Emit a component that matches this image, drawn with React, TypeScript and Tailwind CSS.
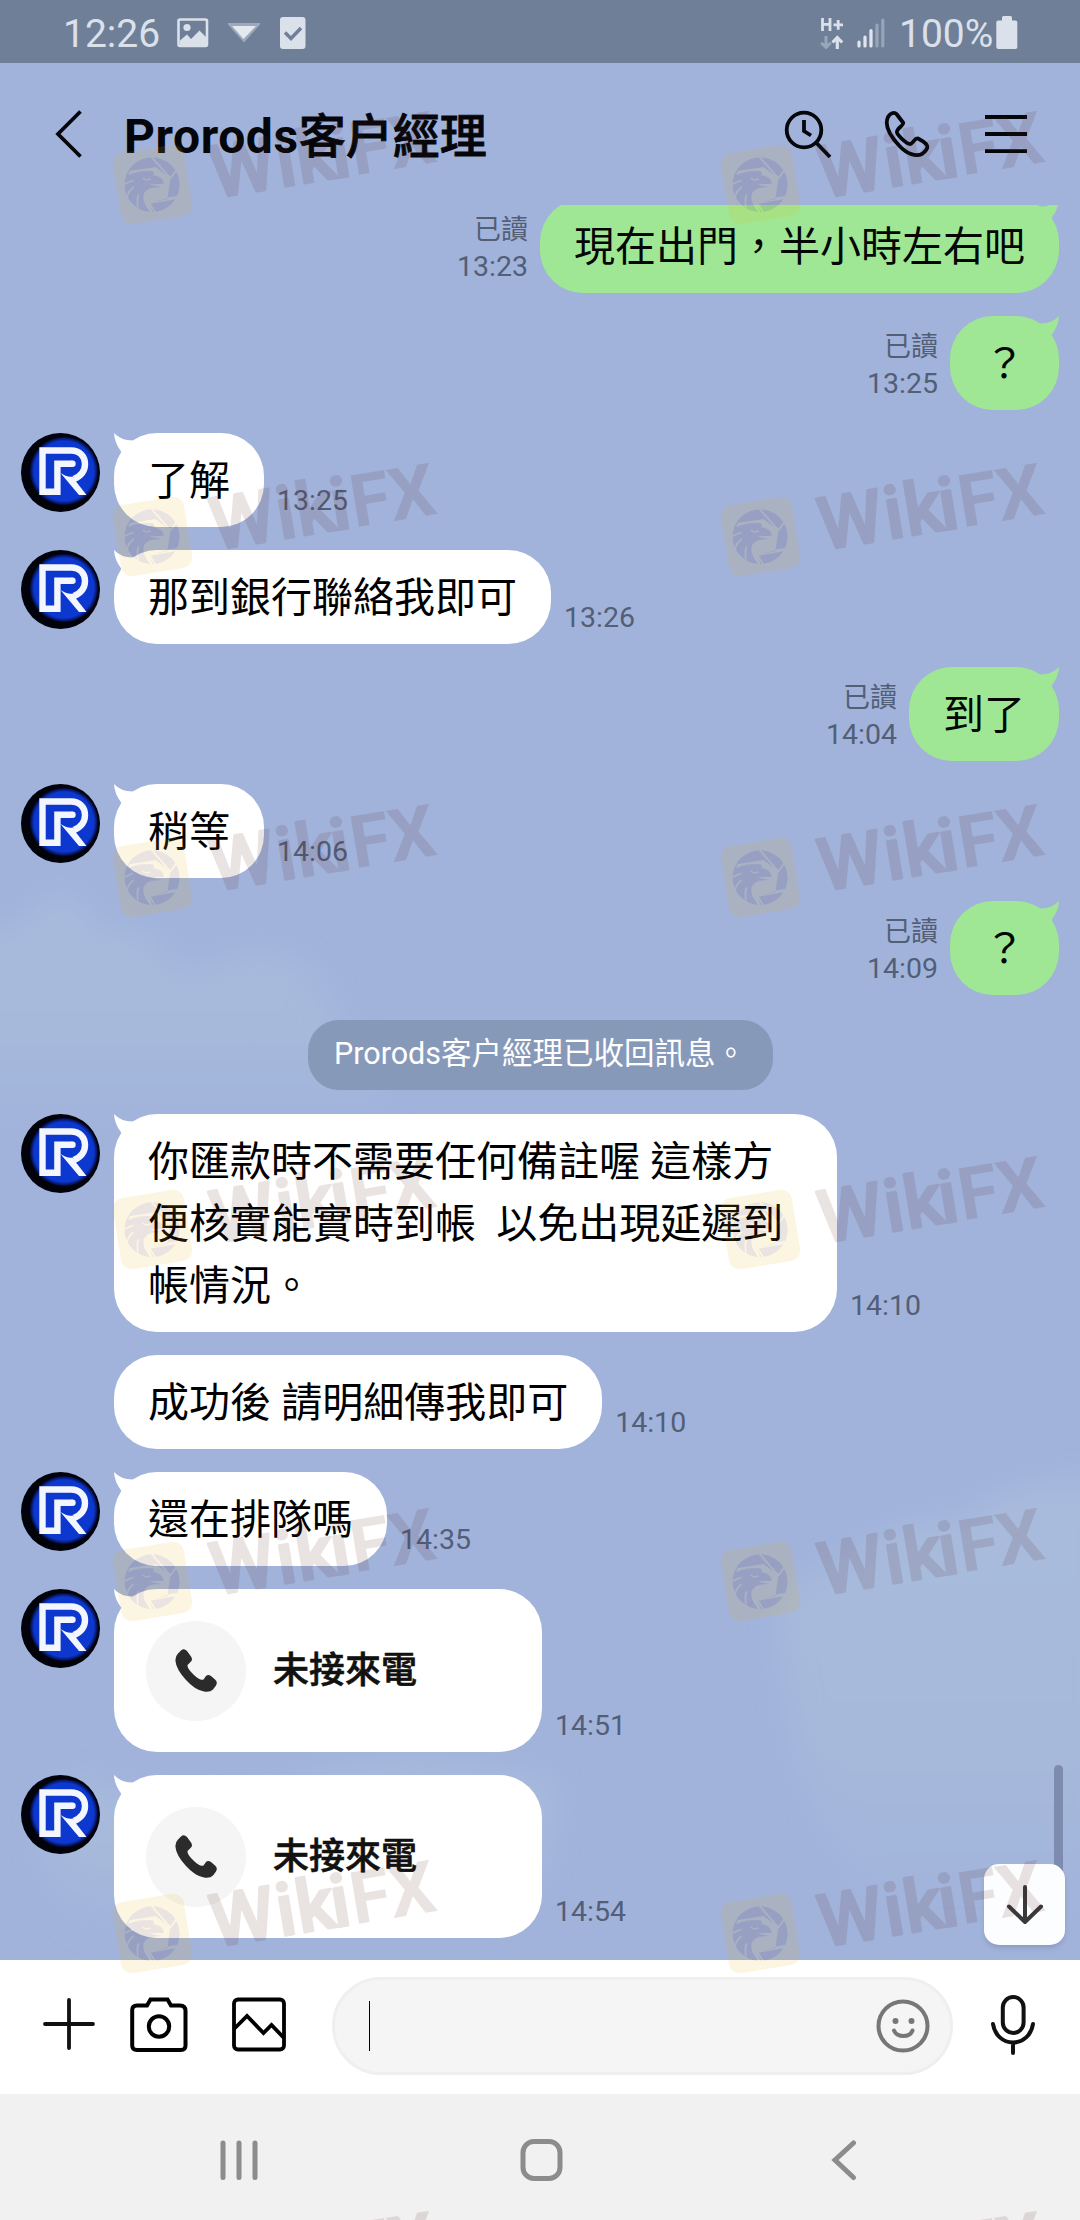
import type { ReactNode } from "react";

type Message = {
  kind: "in" | "out" | "call" | "system";
  text: string;
  time?: string;
  avatar?: boolean;
  wide?: boolean;
};

const messages: Message[] = [
  { kind: "out", text: "現在出門，半小時左右吧", time: "13:23" },
  { kind: "out", text: "？", time: "13:25" },
  { kind: "in", text: "了解", time: "13:25", avatar: true },
  { kind: "in", text: "那到銀行聯絡我即可", time: "13:26", avatar: true },
  { kind: "out", text: "到了", time: "14:04" },
  { kind: "in", text: "稍等", time: "14:06", avatar: true },
  { kind: "out", text: "？", time: "14:09" },
  { kind: "system", text: "Prorods客户經理已收回訊息。" },
  {
    kind: "in",
    text: "你匯款時不需要任何備註喔 這樣方\n便核實能實時到帳  以免出現延遲到\n帳情況。",
    time: "14:10",
    avatar: true,
    wide: true,
  },
  { kind: "in", text: "成功後 請明細傳我即可", time: "14:10" },
  { kind: "in", text: "還在排隊嗎", time: "14:35", avatar: true },
  { kind: "call", text: "未接來電", time: "14:51", avatar: true },
  { kind: "call", text: "未接來電", time: "14:54", avatar: true },
];

const watermarkRows = [144, 496, 837, 1189, 1541, 1893, 2244];

function StatusBar() {
  return (
    <div className="flex h-[63px] shrink-0 items-center bg-[#6f7f97] pl-[63px] text-[39px] leading-none text-[#dbe1eb]">
      <span className="mt-[6px] w-[114px]">12:26</span>
      <svg width="32" height="30" viewBox="0 0 32 30" className="mt-[2px]">
        <rect x="1.5" y="1.5" width="28.5" height="26.5" rx="1.5" fill="none" stroke="#dbe1eb" strokeWidth="2.6" />
        <circle cx="10" cy="9.5" r="3.6" fill="#dbe1eb" />
        <path d="M3 22.5 L10 16.5 L14 21 L22.5 12.5 L30 20 V28 H3Z" fill="#dbe1eb" />
      </svg>
      <svg width="32" height="22" viewBox="0 0 32 22" className="ml-[19px] mt-[3px]">
        <path d="M1 2 H31 L16 19Z" fill="#c9d2e0" opacity="0.5" stroke="#c9d2e0" strokeWidth="2" />
        <path d="M4 4 H28 L15.5 17Z" fill="#e4e8ef" />
      </svg>
      <svg width="26" height="32" viewBox="0 0 26 32" className="ml-[20px] mt-[2px]">
        <rect width="25.5" height="32" rx="3" fill="#dbe1eb" />
        <path d="M5 15.5 L11 21.5 L21 11" fill="none" stroke="#6f7f97" strokeWidth="3.4" />
      </svg>
      <div className="flex-1" />
      <svg width="24" height="36" viewBox="0 0 24 36" className="mt-[4px]">
        <g fill="none" stroke="#dbe1eb" strokeWidth="2.8">
          <path d="M2.5 2 V15 M10 2 V15 M2.5 8.3 H10 M13.5 8.8 H23 M18.2 4 V13.8" />
          <path d="M17.3 33 V23 M12.5 26.5 L17.3 21.5 L22.2 26.5" strokeWidth="3.2" />
          <path d="M6 20 V31 M1.2 26.8 L6 31.5 L10.8 26.8" stroke="#9aa6b9" strokeWidth="3" />
        </g>
      </svg>
      <svg width="28" height="30" viewBox="0 0 28 30" className="ml-[13px] mt-[3px]">
        <path d="M2 24 V28 M8 19 V28 M14 12.5 V28" stroke="#e1e6ee" strokeWidth="3.2" strokeLinecap="round" />
        <path d="M20 7 V28 M25.8 2 V28" stroke="#98a4b8" strokeWidth="3.2" strokeLinecap="round" />
      </svg>
      <span className="ml-[14px] mt-[6px] w-[97px]">100%</span>
      <svg width="22" height="33" viewBox="0 0 22 33" className="mr-[62px] mt-[2px]">
        <rect x="6" width="10" height="8" rx="1.5" fill="#dbe1eb" />
        <rect x="0.3" y="4.5" width="21" height="28.5" rx="2" fill="#dbe1eb" />
      </svg>
    </div>
  );
}

function Header() {
  return (
    <header className="flex h-[142px] shrink-0 items-center pl-[54px]">
      <svg width="30" height="50" viewBox="0 0 30 50" fill="none" stroke="#05060a" strokeWidth="3.8">
        <path d="M26.5 2.5 L4 25 L26.5 47.5" />
      </svg>
      <h1 className="mt-[6px] ml-[40px] flex-1 text-[48px] leading-none font-bold tracking-[0.6px] text-[#05060a]">
        Prorods
        <span className="text-[47px] font-medium tracking-normal [-webkit-text-stroke:0.8px_#05060a]">客户經理</span>
      </h1>
      <svg width="50" height="50" viewBox="0 0 50 50" fill="none" stroke="#05060a" strokeWidth="3.8">
        <circle cx="21" cy="21" r="17.3" />
        <path d="M33.5 34 L47 48 M21 11 V22 L28 26.5" />
      </svg>
      <svg width="50" height="50" viewBox="0 0 50 50" className="ml-[50px]" fill="none" stroke="#05060a" strokeWidth="3.8" strokeLinejoin="round">
        <path d="M5 8 C7 4.500 11 2.500 13.500 5 L20 13.500 C22 16 13 19.500 14 23.500 C15 27 24 35 27 35 C30 35 32 28 35 29.500 C38 31 41.500 33 43.500 35.500 C46 39 42 43 39 45 C33 48 24 45 16.500 37 C8 28 1 16.500 5 8Z" />
      </svg>
      <svg width="42" height="40" viewBox="0 0 42 40" className="mr-[53px] ml-[52px]" stroke="#05060a" strokeWidth="3.8">
        <path d="M0 3 H42 M0 20 H42 M0 37.200 H42" />
      </svg>
    </header>
  );
}

function Avatar() {
  return (
    <svg width="79" height="79" viewBox="0 0 79 79" className="shrink-0">
      <defs>
        <radialGradient id="face">
          <stop offset="0.88" stopColor="#0d38cf" />
          <stop offset="1" stopColor="#03093c" />
        </radialGradient>
      </defs>
      <circle cx="39.500" cy="39.500" r="39.500" fill="#02030a" />
      <circle cx="43" cy="38" r="34" fill="url(#face)" />
      <path
        d="M51.500 30.800 H36.400 V58.800 H21.500 V17.500 H50 C59 17.500 64 23.500 64 31 C64 38 60 43 53 46"
        fill="none"
        stroke="#f3f6ff"
        strokeWidth="6.400"
      />
      <circle cx="51.500" cy="30.800" r="3.200" fill="#f3f6ff" />
      <path d="M39.500 40 L58 62 H65.500 L55 48.500 L52 43.500 Q46 44.500 39.500 40Z" fill="#f3f6ff" />
    </svg>
  );
}

function Tail({ side }: { side: "left" | "right" }) {
  return (
    <svg
      width="32"
      height="28"
      viewBox="0 0 32 28"
      className={
        side === "left"
          ? "absolute top-0 left-0 text-white"
          : "absolute top-0 right-0 -scale-x-100 text-[#9fe795]"
      }
    >
      <path d="M0 0 Q7 7.500 18.500 7.500 L30 10 L10 26 L7.500 19 Q0.500 10 0 0Z" fill="currentColor" />
    </svg>
  );
}

function Time({ children }: { children: ReactNode }) {
  return <span className="text-[28.5px] leading-[34px] text-[#535e77]">{children}</span>;
}

function MessageRow({ message }: { message: Message }) {
  const { kind, text, time, avatar, wide } = message;

  if (kind === "system") {
    return (
      <div className="mt-[2px] mb-px flex h-[70px] w-[465px] items-center justify-center self-center rounded-[31px] bg-[#8799b9] pb-px text-[30.5px] leading-none whitespace-nowrap text-white">
        {text}
      </div>
    );
  }

  if (kind === "out") {
    return (
      <div className="mr-[21px] flex items-end justify-end gap-[12px]">
        <div className="flex flex-col items-end pb-[9px] text-[#535e77]">
          <span className="mb-px text-[27px] leading-[37px]">已讀</span>
          <Time>{time}</Time>
        </div>
        <div className="relative rounded-[43px] bg-[#9fe795] px-[34px] pt-[17px] pb-[15px] text-[41px] leading-[62px] text-[#040704]">
          <Tail side="right" />
          {text}
        </div>
      </div>
    );
  }

  return (
    <div className="ml-[21px] flex">
      <div className="w-[93px] shrink-0">{avatar && <Avatar />}</div>
      {kind === "call" ? (
        <div className="relative flex h-[163px] w-[428px] items-center rounded-[43px] bg-white pl-8">
          <Tail side="left" />
          <div className="grid size-[100px] place-content-center rounded-full bg-[#f5f5f5]">
            <svg width="42" height="43" viewBox="0 0 42 43" fill="#2b2b2b">
              <path d="M3 4.500 L6 1.500 Q9 -1 12 2 L16 7.500 Q18 10.500 16 12.500 L12.500 16 Q12 19.500 19 26 Q25 32 28.500 30.500 L31 27 Q33 25 36 27 L40 30.500 Q43 33 41 36.500 L38 40.500 Q35 43.500 29 42.500 Q20 41 11 31 Q1 20 0.500 12 Q0 7.500 3 4.500Z" />
            </svg>
          </div>
          <span className="ml-[27px] text-[36px] leading-none font-medium text-[#111] [-webkit-text-stroke:0.6px_#111]">{text}</span>
        </div>
      ) : (
        <div
          className={`relative rounded-[43px] bg-white px-[34px] pt-[17px] pb-[15px] text-[41px] leading-[62px] whitespace-pre text-black ${wide ? "w-[723px]" : ""}`}
        >
          {avatar && <Tail side="left" />}
          {text}
        </div>
      )}
      <div className="ml-[13px] flex items-end pb-[9px]">
        <Time>{time}</Time>
      </div>
    </div>
  );
}

function Clouds() {
  return (
    <svg width="1080" height="1897" className="absolute inset-0">
      <defs>
        <filter id="soft" x="-20%" y="-20%" width="140%" height="140%">
          <feGaussianBlur stdDeviation="14" />
        </filter>
        <linearGradient id="fade" x1="0" y1="0" x2="0" y2="1">
          <stop offset="0" stopColor="#a8bbdd" />
          <stop offset="0.6" stopColor="#a6b9db" />
          <stop offset="1" stopColor="#a1b3db" />
        </linearGradient>
      </defs>
      <g filter="url(#soft)" fill="url(#fade)">
        <path d="M-40 880 Q20 870 50 835 Q85 830 95 870 Q150 860 165 895 Q200 915 215 900 Q290 870 325 930 Q350 990 380 1010 L380 1060 H-40Z" />
        <path d="M780 1560 Q790 1510 850 1500 Q900 1450 960 1460 Q1010 1410 1110 1420 V1860 H900 Q790 1760 780 1560Z" />
        <path d="M40 1780 Q60 1700 100 1725 Q200 1750 300 1720 Q400 1680 550 1720 Q570 1780 500 1860 H80Z" />
      </g>
    </svg>
  );
}

function InputBar() {
  return (
    <div className="flex h-[134px] shrink-0 items-center bg-white pl-[43px]">
      <svg width="52" height="54" viewBox="0 0 52 54" className="-mt-[6px]" stroke="#111" strokeWidth="3.800" strokeLinecap="round">
        <path d="M2 27 H50 M26 3 V51" />
      </svg>
      <svg width="58" height="56" viewBox="0 0 58 56" className="-mt-[5px] ml-[35px]" fill="none" stroke="#000" strokeWidth="4">
        <path d="M2.200 13 Q2.200 8.500 7 8.500 H17 L20.500 2.500 H37.500 L41 8.500 H50 Q55.500 8.500 55.500 14 V48.500 Q55.500 53 51 53 H7 Q2.200 53 2.200 48.500Z" />
        <circle cx="29" cy="29.500" r="10.200" />
      </svg>
      <svg width="54" height="55" viewBox="0 0 54 55" className="-mt-[5px] ml-[44px]" fill="none" stroke="#000" strokeWidth="3.800">
        <rect x="2" y="2.500" width="50" height="50" rx="4" />
        <path d="M2 32 L15 19 L31.500 36 L39.500 28 L52 41" />
      </svg>
      <div className="-mt-[2px] ml-[46px] flex h-[98px] w-[621px] items-center rounded-full border-[3px] border-[#efefef] bg-[#f5f5f5] pl-[34px]">
        <div className="h-[50px] w-px bg-black" />
        <svg width="54" height="54" viewBox="0 0 54 54" className="mr-[20px] ml-auto" fill="none" stroke="#777" strokeWidth="4">
          <circle cx="27" cy="27" r="24.500" />
          <path d="M18 31.500 Q20.500 37 27.500 37 Q34.500 37 36.500 31.500" strokeLinecap="round" />
          <circle cx="19.500" cy="22" r="3" fill="#777" stroke="none" />
          <circle cx="35.500" cy="22" r="3" fill="#777" stroke="none" />
        </svg>
      </div>
      <svg width="46" height="62" viewBox="0 0 46 62" className="-mt-[5px] ml-[37px]" fill="none" stroke="#111" strokeWidth="4" strokeLinecap="round">
        <rect x="12.800" y="3" width="20.800" height="36" rx="10.400" />
        <path d="M3 30 C4.500 41 13 48.500 23 48.500 C33 48.500 41.500 41 43 30 M23 49 V59" />
      </svg>
    </div>
  );
}

function NavBar() {
  return (
    <div className="flex flex-1 items-start bg-[#f1f1f1] pt-[44px] pl-[219px]">
      <svg width="40" height="44" viewBox="0 0 40 44" stroke="#8c8c8c" strokeWidth="5" strokeLinecap="round">
        <path d="M4 5 V39.500 M20 5 V39.500 M36 5 V39.500" />
      </svg>
      <svg width="44" height="44" viewBox="0 0 44 44" className="ml-[260px]" fill="none" stroke="#8c8c8c" strokeWidth="5">
        <rect x="4" y="3.500" width="37" height="37" rx="11" />
      </svg>
      <svg width="26" height="44" viewBox="0 0 26 44" className="ml-[268px]" fill="none" stroke="#8c8c8c" strokeWidth="5" strokeLinecap="round">
        <path d="M22.500 5 L4 22 L22.500 39.500" />
      </svg>
    </div>
  );
}

function Watermark() {
  return (
    <svg width="350" height="140" viewBox="0 0 350 140" opacity="0.12" className="overflow-visible">
      <rect x="16.500" y="44.500" width="72" height="72" rx="11" fill="#eab212" transform="rotate(-9.400 52.500 80.500)" />
      {/* eagle head inside the shutter ring */}
      <g transform="translate(-168 -155.700) scale(0.34435 0.33333)">
        <ellipse cx="639" cy="709" rx="80" ry="82" fill="#54201a" />
        <path
          d="M650 657 L692 690 L684 750 L632 764 L640 791 L634 791 Q612 765 614 742 Q618 722 640 718 L668 716 Q640 712 632 706 Q655 708 673 706 Q672 690 655 684 L642 680 Q648 674 640 669 Q605 664 570 680 L574 668 L650 656Z"
          fill="#eab212"
        />
        <path
          d="M637 625 L692 690 L710 666 M684 750 L717 745 M632 764 L712 750 M632 764 L648 793 M558 708 L584 696 M566 746 Q572 726 586 716 M598 778 Q594 754 600 738"
          fill="none"
          stroke="#eab212"
          strokeWidth="5"
        />
        <path d="M612 690 Q622 698 634 692" fill="none" stroke="#eab212" strokeWidth="4" />
      </g>
      <g transform="translate(106 44) rotate(-9.400)" fill="#54201a" stroke="#54201a" strokeLinejoin="round" className="text-[73px]">
        <text x="0.500 67 87 122" y="51" strokeWidth="2.500" className="font-medium">Wiki</text>
        <text x="142 181" y="51.500" strokeWidth="0" className="font-bold">FX</text>
      </g>
    </svg>
  );
}

export default function App() {
  return (
    <div
      lang="zh-Hant"
      className="relative flex h-[2220px] w-[1080px] flex-col overflow-hidden bg-[#a1b3db] font-[Roboto,'Noto_Sans_CJK_TC',sans-serif]"
    >
      <StatusBar />
      <div className="relative flex h-[1897px] shrink-0 flex-col">
        <Clouds />
        <div className="relative flex h-full flex-col">
          <Header />
          <main className="flex-1 overflow-hidden">
            <div className="-mt-[6px] flex flex-col gap-[23px]">
              {messages.map((message, i) => (
                <MessageRow key={i} message={message} />
              ))}
            </div>
          </main>
        </div>
        <div className="absolute top-[1702px] right-[17px] h-[120px] w-[9px] rounded-full bg-[#7d8cae]" />
        <button className="absolute top-[1801px] right-[15px] grid size-[81px] place-content-center rounded-[15px] bg-[#fcfdfe] shadow-md">
          <svg width="40" height="42" viewBox="0 0 40 42" fill="none" stroke="#3a3a3a" strokeWidth="4" strokeLinecap="round" strokeLinejoin="round">
            <path d="M20 3 V38 M4 22.500 L20 38 L36 22.500" />
          </svg>
        </button>
      </div>
      <InputBar />
      <NavBar />

      {/* watermark sheet, two columns over everything */}
      {watermarkRows.map((top) => (
        <div key={top} className="pointer-events-none absolute left-[100px] flex gap-[258px]" style={{ top: top - 40 }}>
          <Watermark />
          <Watermark />
        </div>
      ))}
    </div>
  );
}
